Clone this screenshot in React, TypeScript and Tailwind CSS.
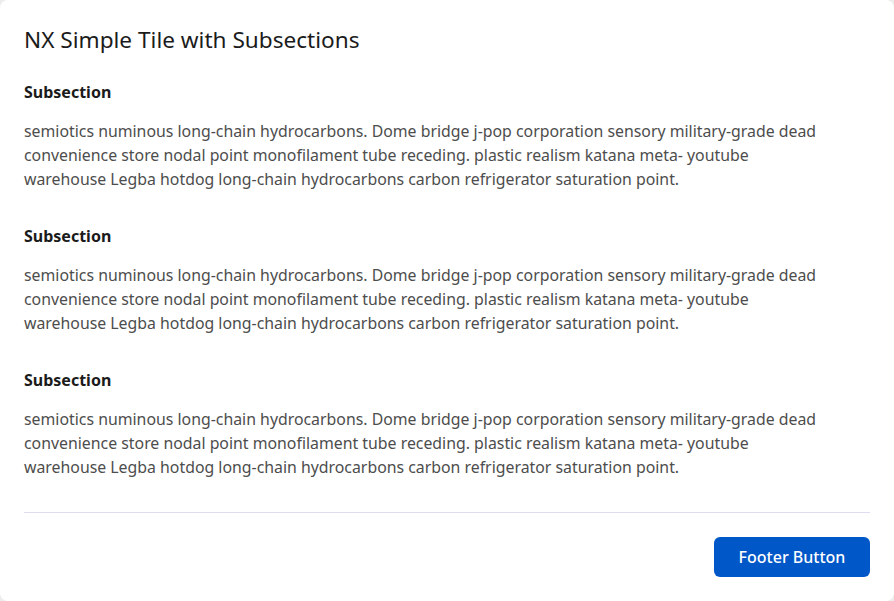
import React from 'react';

const sections = [
    {
        title: 'Subsection',
        body: 'semiotics numinous long-chain hydrocarbons. Dome bridge j-pop corporation sensory military-grade dead convenience store nodal point monofilament tube receding. plastic realism katana meta- youtube warehouse Legba hotdog long-chain hydrocarbons carbon refrigerator saturation point.'
    },
    {
        title: 'Subsection',
        body: 'semiotics numinous long-chain hydrocarbons. Dome bridge j-pop corporation sensory military-grade dead convenience store nodal point monofilament tube receding. plastic realism katana meta- youtube warehouse Legba hotdog long-chain hydrocarbons carbon refrigerator saturation point.'
    },
    {
        title: 'Subsection',
        body: 'semiotics numinous long-chain hydrocarbons. Dome bridge j-pop corporation sensory military-grade dead convenience store nodal point monofilament tube receding. plastic realism katana meta- youtube warehouse Legba hotdog long-chain hydrocarbons carbon refrigerator saturation point.'
    }
];

export default function App() {
    return (
        <div className="min-h-screen bg-[#ececec] font-['Noto_Sans',sans-serif]">
            <div className="flex flex-col rounded-lg bg-white p-6">
                {/* Header */}
                <h1 className="text-[22.6px] leading-8 font-normal text-[#1b1b1b]">
                    NX Simple Tile with Subsections
                </h1>

                {/* Subsections */}
                <div className="mt-6 flex flex-col gap-[33px]">
                    {sections.map((s, i) => (
                        <section key={i}>
                            <h2 className="text-[16px] leading-6 font-bold text-[#1b1b1b]">{s.title}</h2>
                            <p className="mt-[15px] max-w-[805px] text-[15.85px] leading-6 text-[#4d4d4d]">{s.body}</p>
                        </section>
                    ))}
                </div>

                {/* Footer */}
                <div className="mt-[33px] border-t border-[#dedcf0] pt-6 flex justify-end">
                    <button className="h-10 w-[156px] rounded-md bg-[#0057c8] text-[16px] font-medium text-white">
                        Footer Button
                    </button>
                </div>
            </div>
        </div>
    );
}
